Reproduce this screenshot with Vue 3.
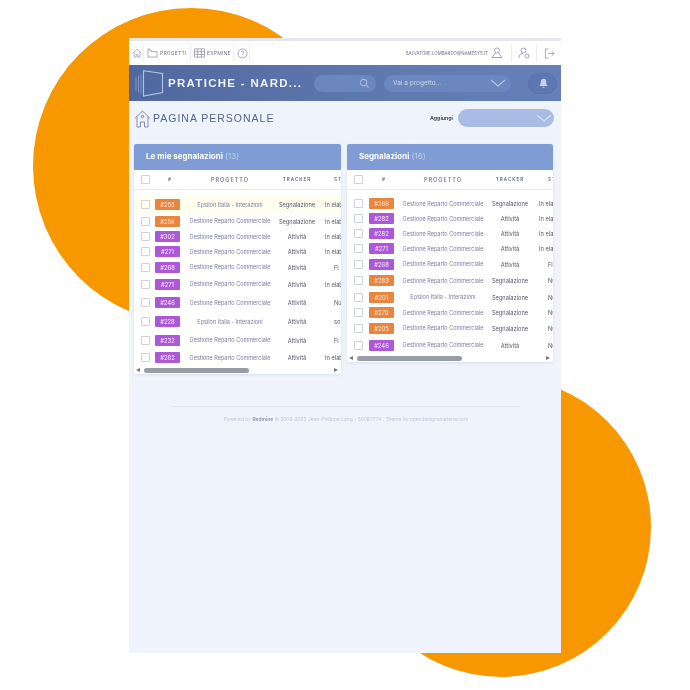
<script setup>
const epsilon = 'Epsilon Italia - Interazioni'
const gestione = 'Gestione Reparto Commerciale'

const cards = [
  {
    title: 'Le mie segnalazioni',
    count: '(13)',
    rows: [
      { id: '#255', kind: 'seg', project: epsilon, status: 'In elab', h: 17, hl: true },
      { id: '#256', kind: 'seg', project: gestione, status: 'In elab', h: 16 },
      { id: '#302', kind: 'att', project: gestione, status: 'In elab', h: 15 },
      { id: '#271', kind: 'att', project: gestione, status: 'In elab', h: 15 },
      { id: '#268', kind: 'att', project: gestione, status: 'Fi', center: true, h: 16 },
      { id: '#271', kind: 'att', project: gestione, status: 'In elab', h: 18 },
      { id: '#246', kind: 'att', project: gestione, status: 'Nu', center: true, h: 19 },
      { id: '#228', kind: 'att', project: epsilon, status: 'sos', center: true, h: 19 },
      { id: '#232', kind: 'att', project: gestione, status: 'Fi', center: true, h: 18 },
      { id: '#282', kind: 'att', project: gestione, status: 'In elab', h: 17 }
    ]
  },
  {
    title: 'Segnalazioni',
    count: '(16)',
    rows: [
      { id: '#266', kind: 'seg', project: gestione, status: 'In elab', h: 15 },
      { id: '#282', kind: 'att', project: gestione, status: 'In elab', h: 15 },
      { id: '#282', kind: 'att', project: gestione, status: 'In elab', h: 15 },
      { id: '#271', kind: 'att', project: gestione, status: 'In elab', h: 15 },
      { id: '#268', kind: 'att', project: gestione, status: 'Fi', center: true, h: 16 },
      { id: '#283', kind: 'seg', project: gestione, status: 'Nu', center: true, h: 17 },
      { id: '#201', kind: 'seg', project: epsilon, status: 'Nu', center: true, h: 16 },
      { id: '#270', kind: 'seg', project: gestione, status: 'Nu', center: true, h: 15 },
      { id: '#205', kind: 'seg', project: gestione, status: 'Nu', center: true, h: 16 },
      { id: '#246', kind: 'att', project: gestione, status: 'Nu', center: true, h: 18 }
    ]
  }
]

const trackers = { seg: 'Segnalazione', att: 'Attività' }
</script>

<template>
  <div class="page">
    <div class="blob blob--top"></div>
    <div class="blob blob--bottom"></div>

    <div class="window">
      <div class="strip"></div>

      <!-- menu in alto -->
      <nav class="topmenu">
        <div class="menu-item menu-item--home">
          <svg width="10" height="10" viewBox="0 0 12 12" class="ico"><path d="M1 6 6 1.500 11 6M2.500 5v6H5V8h2v3h2.500V5" /></svg>
        </div>
        <div class="menu-item menu-item--projects">
          <svg width="11" height="10" viewBox="0 0 12 11" class="ico"><path d="M1 1v9h10V4H4.500V2.500H2.500V1z" /></svg>
          <span>PROGETTI</span>
        </div>
        <div class="menu-item menu-item--expense">
          <svg width="11" height="10" viewBox="0 0 12 10" class="ico"><path d="M.5.500h11v9H.5zM.5 3.500h11M.5 6.500h11M4 .5v9M8 .5v9" /></svg>
          <span>EXPMINE</span>
        </div>
        <div class="menu-item menu-item--help">
          <svg width="11" height="11" viewBox="0 0 12 12" class="ico"><circle cx="6" cy="6" r="5" /><path d="M4.500 4.800c0-2 3-2 3-.2 0 1.200-1.500 1.200-1.500 2.600M6 8.500v.8" /></svg>
        </div>
        <div class="menu-user">SALVATORE.LOMBARDO@NAMESYS.IT</div>
        <div class="menu-right menu-right--me">
          <svg width="12" height="12" viewBox="0 0 12 12" class="ico"><circle cx="6" cy="3.500" r="2.500" /><path d="M4.500 6 1 10.500h10L7.500 6" /></svg>
        </div>
        <div class="menu-right menu-right--account">
          <svg width="12" height="12" viewBox="0 0 12 12" class="ico"><circle cx="5.500" cy="3.500" r="2.500" /><path d="M1 11c0-3 1.500-4.500 4-4.500" /><circle cx="9" cy="9" r="2" /></svg>
        </div>
        <div class="menu-right menu-right--logout">
          <svg width="11" height="11" viewBox="0 0 12 12" class="ico"><path d="M5 1H1.500v10H5M4.500 6H11M8.500 3.500 11 6 8.500 8.500" /></svg>
        </div>
      </nav>

      <!-- testata -->
      <header class="brandbar">
        <svg class="logo" width="29" height="27" viewBox="0 0 29 27" fill="none">
          <path d="M1 7v14M3.500 5.500v17M6 4.500v19" stroke="#8ea3cf" stroke-width=".8" />
          <path d="M8.500.8 27.500 3.500v19L8.500 26z" stroke="#b4c4e4" stroke-width="1.100" />
        </svg>
        <div class="brand-title">PRATICHE - NARD...</div>
        <div class="search-pill">
          <svg width="11" height="11" viewBox="0 0 12 12" fill="none" stroke="#a9bbe0" stroke-width="1.100"><circle cx="5" cy="5" r="3.500" /><path d="m7.500 7.500 3 3" /></svg>
        </div>
        <div class="project-pill">
          <span>Vai a progetto...</span>
          <svg width="16" height="8" viewBox="0 0 16 8" fill="none" stroke="#b5c5e6" stroke-width="1.100"><path d="m1 1 7 6 7-6" /></svg>
        </div>
        <div class="bell-pill">
          <svg width="11" height="11" viewBox="0 0 12 12"><path d="M6 .8c2.300 0 3 1.800 3 3.700 0 2 .7 3.300 1.800 4.300H1.200C2.300 7.800 3 6.500 3 4.500 3 2.600 3.700.8 6 .8zM5 9.500h2v1H5z" fill="#c6d0e6" /></svg>
        </div>
      </header>

      <!-- titolo pagina -->
      <div class="pagehead">
        <svg class="pagehead__ico" width="17" height="18" viewBox="0 0 17 18" fill="none" stroke="#6a7397" stroke-width=".8">
          <path d="M.8 8.500 8.500 1l7.700 7.500M3 7v10h3.500v-5h4v5H14V7" />
          <circle cx="8.500" cy="6.500" r="1.200" />
        </svg>
        <h1>PAGINA PERSONALE</h1>
        <label>Aggiungi</label>
        <div class="add-pill">
          <svg width="16" height="8" viewBox="0 0 16 8" fill="none" stroke="#d5dff3" stroke-width="1.100"><path d="m1 1 7 6 7-6" /></svg>
        </div>
      </div>

      <!-- le due tabelle -->
      <section class="cards">
        <article v-for="card in cards" :key="card.title" class="card">
          <div class="card__title">
            <b>{{ card.title }}</b> <span>{{ card.count }}</span>
          </div>
          <div class="thead line">
            <div class="cell-check"><i class="check"></i></div>
            <div class="cell-id">#</div>
            <div class="cell-project">PROGETTO</div>
            <div class="cell-tracker">TRACKER</div>
            <div class="cell-status">STATO</div>
          </div>
          <div class="tbody">
            <div
              v-for="(row, i) in card.rows"
              :key="i"
              class="line row"
              :class="{ 'row--hl': row.hl }"
              :style="{ height: row.h + 'px' }"
            >
              <div class="cell-check"><i class="check"></i></div>
              <div class="cell-id"><span class="badge" :class="'badge--' + row.kind">{{ row.id }}</span></div>
              <div class="cell-project">{{ row.project }}</div>
              <div class="cell-tracker">{{ trackers[row.kind] }}</div>
              <div class="cell-status" :class="{ 'cell-status--c': row.center }">{{ row.status }}</div>
            </div>
          </div>
          <div class="scrollbar">
            <i class="arrow arrow--l"></i>
            <div class="track"><div class="thumb"></div></div>
            <i class="arrow arrow--r"></i>
          </div>
        </article>
      </section>

      <footer class="foot">
        <p>Powered by <b>Redmine</b> © 2006-2022 Jean-Philippe Lang - 50087774 . Theme by opendesignsmateria.com</p>
      </footer>
    </div>
  </div>
</template>

<style>
html, body {
  margin: 0;
  background: #fff;
}
</style>

<style scoped>
.page {
  position: relative;
  width: 690px;
  height: 690px;
  overflow: hidden;
  box-sizing: border-box;
  padding: 38px 0 0 129px;
  font-family: "Inter", "Liberation Sans", sans-serif;
  background: #fff;
}

.blob {
  position: absolute;
  border-radius: 50%;
  background: #f79800;
}
.blob--top {
  left: 33px;
  top: 8px;
  width: 316px;
  height: 316px;
}
.blob--bottom {
  left: 351px;
  top: 377px;
  width: 300px;
  height: 300px;
}

.window {
  position: relative;
  width: 432px;
  height: 615px;
  background: #eff3fb;
  display: flex;
  flex-direction: column;
  filter: blur(.3px);
}

.strip {
  height: 3px;
  background: #e4e6ea;
}

.topmenu {
  height: 24px;
  background: #fff;
  display: flex;
  align-items: stretch;
  font-size: 5px;
  letter-spacing: .2px;
  color: #6f7696;
}
.ico {
  fill: none;
  stroke: #8b90a8;
  stroke-width: .8;
  flex: none;
}
.menu-item {
  display: flex;
  align-items: center;
  gap: 2px;
  box-sizing: border-box;
  border-right: 1px solid #eceef3;
  margin: 3px 0;
  padding-left: 3px;
}
.menu-item--home { width: 15px; }
.menu-item--projects { width: 47px; }
.menu-item--expense { width: 43px; }
.menu-item--help { width: 16px; padding-left: 3px; }
.menu-user {
  margin-left: auto;
  align-self: center;
  color: #676d90;
  white-space: nowrap;
  font-size: 4.400px;
  letter-spacing: 0;
}
.menu-right {
  display: flex;
  align-items: center;
  justify-content: center;
  box-sizing: border-box;
  margin: 3px 0;
}
.menu-right--me { width: 24px; padding-right: 6px; border-right: 1px solid #eceef3; }
.menu-right--account { width: 25px; border-right: 1px solid #eceef3; }
.menu-right--logout { width: 24px; }

.brandbar {
  height: 36px;
  background: linear-gradient(90deg, #4f689f 0%, #5f79b1 60%, #6580b8 100%);
  display: flex;
  align-items: center;
  box-sizing: border-box;
  padding-left: 6px;
}
.logo { flex: none; }
.brand-title {
  width: 146px;
  margin-left: 4px;
  color: #eef2fa;
  font-family: "Liberation Sans", sans-serif;
  font-weight: 700;
  font-size: 11.500px;
  letter-spacing: 1.300px;
  white-space: nowrap;
}
.search-pill,
.project-pill {
  height: 17px;
  border-radius: 9px;
  background: #6c86bf;
  display: flex;
  align-items: center;
  box-sizing: border-box;
}
.search-pill {
  width: 62px;
  justify-content: flex-end;
  padding-right: 6px;
}
.project-pill {
  width: 127px;
  margin-left: 8px;
  padding: 0 5px 0 9px;
  justify-content: space-between;
  font-size: 6.500px;
  color: #cbd6ec;
}
.bell-pill {
  width: 29px;
  height: 21px;
  margin-left: 17px;
  border-radius: 11px;
  background: #5d77b0;
  border: 1px solid #5872ab;
  box-sizing: border-box;
  display: flex;
  align-items: center;
  justify-content: center;
  padding-left: 2px;
}

.pagehead {
  height: 43px;
  display: flex;
  align-items: flex-start;
  box-sizing: border-box;
  padding: 8px 7px 0 5px;
}
.pagehead__ico { margin-top: 1px; flex: none; }
.pagehead h1 {
  margin: 2px 0 0 2px;
  font-family: "Liberation Sans", sans-serif;
  font-weight: 400;
  font-size: 10.500px;
  line-height: 14px;
  letter-spacing: 1px;
  color: #56648e;
  white-space: nowrap;
}
.pagehead label {
  margin: 5px 5px 0 auto;
  font-size: 5.300px;
  font-weight: 600;
  color: #333;
  line-height: 8px;
}
.add-pill {
  width: 96px;
  height: 18px;
  border-radius: 9px;
  background: #a9bce4;
  display: flex;
  align-items: center;
  justify-content: flex-end;
  padding-right: 2px;
  box-sizing: border-box;
}

.cards {
  display: flex;
  align-items: flex-start;
  gap: 6px;
  padding-left: 5px;
}
.card {
  width: 207px;
  flex: none;
  overflow: hidden;
  background: #fff;
  border-radius: 2px;
  box-shadow: 0 1px 3px rgba(90, 110, 160, .14);
}
.card:last-child { width: 206px; }

.card__title {
  height: 26px;
  background: #7f9cd4;
  color: #fff;
  font-size: 8px;
  line-height: 25px;
  padding-left: 12px;
  white-space: nowrap;
}
.card__title b { font-weight: 700; }
.card__title span { color: #bccce9; font-weight: 400; }

.line {
  display: grid;
  grid-template-columns: 21px 30px 90px 44px 40px;
  align-items: center;
  width: 225px;
  text-align: center;
  white-space: nowrap;
}
.card:last-child .line { grid-template-columns: 22px 30px 88px 46px 40px; }

.thead {
  height: 20px;
  border-bottom: 1px solid #e8ebf2;
  box-sizing: border-box;
  font-size: 4.600px;
  font-weight: 600;
  letter-spacing: 1px;
  color: #606784;
  margin-bottom: 6px;
}

.row {
  font-size: 5.700px;
  color: #55566a;
}
.row--hl { background: #fffeef; }

.check {
  display: block;
  width: 7px;
  height: 7px;
  margin-left: 7px;
  border: 1px solid #cfd2da;
  border-radius: 1px;
}
.badge {
  display: block;
  width: 25px;
  height: 11px;
  line-height: 11px;
  border-radius: 1px;
  color: #f2e3f8;
  font-size: 5.800px;
  font-weight: 500;
}
.badge--seg { background: #e8853e; color: #f9dfcc; }
.badge--att { background: #ad57d9; }

.cell-id {
  display: flex;
  justify-content: flex-start;
}
.thead .cell-id { justify-content: center; }
.cell-project {
  color: #7a7c9e;
  font-size: 5.500px;
}
.cell-status {
  text-align: left;
  padding-left: 6px;
}
.cell-status--c { padding-left: 15px; }
.thead .cell-status { padding-left: 15px; }

.scrollbar {
  height: 8px;
  display: flex;
  align-items: center;
  padding: 0 2px 0 0;
}
.arrow {
  flex: none;
  width: 0;
  height: 0;
  border: 2.500px solid transparent;
}
.arrow--l { border-right: 4px solid #777; border-left: 0; margin-left: 2px; }
.arrow--r { border-left: 4px solid #777; border-right: 0; margin-right: 1px; }
.track { flex: 1; padding: 0 4px; }
.thumb {
  width: 105px;
  height: 5px;
  border-radius: 3px;
  background: #989ca5;
}

.foot {
  margin: 32px 41px 0 43px;
  border-top: 1px solid #e3e7f2;
  text-align: center;
}
.foot p {
  margin: 9px 0 0;
  font-size: 4.900px;
  color: #c3c8dd;
  white-space: nowrap;
}
.foot b { color: #8f93ad; font-weight: 600; }
</style>
